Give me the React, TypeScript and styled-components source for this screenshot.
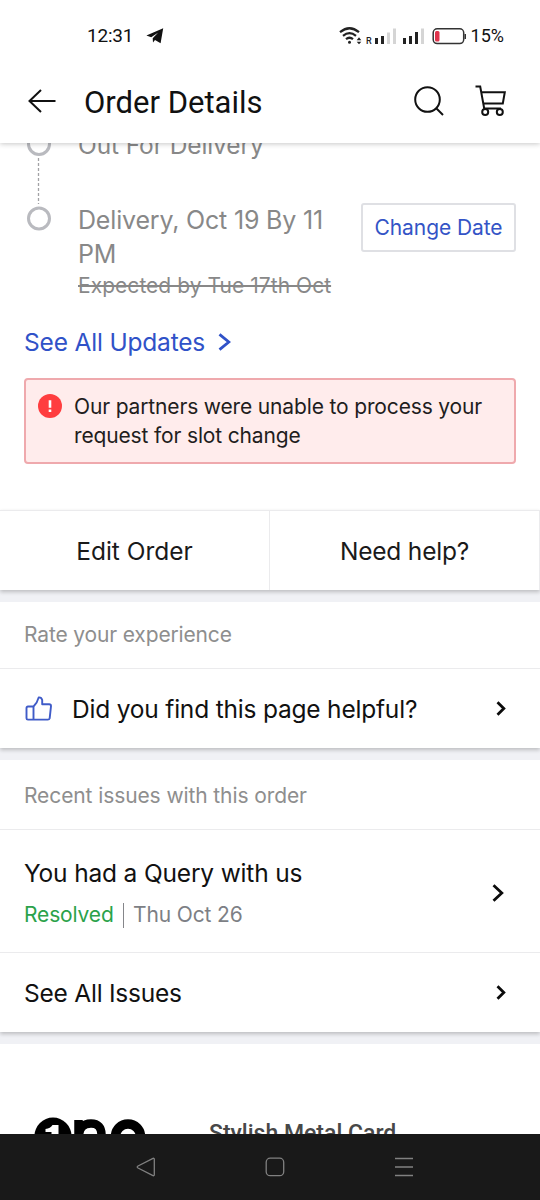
import React from "react";
import styled, { createGlobalStyle } from "styled-components";

const Global = createGlobalStyle`
  *, *::before, *::after { box-sizing: border-box; }
  body { margin: 0; background: #fff; }
`;

const Screen = styled.div`
  width: 540px;
  height: 1200px;
  display: flex;
  flex-direction: column;
  overflow: hidden;
  background: #fff;
  color: #111;
  font-family: Inter, sans-serif;
`;

const Top = styled.div`
  flex: none;
  height: 143px;
  background: #fff;
  z-index: 1;
  box-shadow: 0 1px 5px rgba(0, 0, 0, 0.22);
`;

const StatusBar = styled.div`
  height: 72px;
  padding: 0 36px 0 87px;
  display: flex;
  align-items: center;
  justify-content: space-between;
`;

const StatusGroup = styled.div<{ $gap: number }>`
  display: flex;
  align-items: center;
  gap: ${(p) => p.$gap}px;
`;

const Label = styled.span<{ $size: number; $lh: number; $ls?: number; $color?: string; $weight?: number; $family?: string }>`
  display: block;
  white-space: nowrap;
  font-size: ${(p) => p.$size}px;
  line-height: ${(p) => p.$lh}px;
  letter-spacing: ${(p) => p.$ls ?? 0}px;
  color: ${(p) => p.$color ?? "#111"};
  font-weight: ${(p) => p.$weight ?? 400};
  ${(p) => (p.$family ? `font-family: ${p.$family}, sans-serif;` : "")}
`;

const Header = styled.header`
  height: 60px;
  padding: 0 33px 0 28px;
  display: flex;
  align-items: center;
  gap: 28px;
`;

const BackIcon = styled.svg`
  margin-bottom: 2px;
`;

const Title = styled(Label)`
  padding-top: 2px;
`;

const HeaderActions = styled.div`
  margin-left: auto;
  padding-bottom: 2px;
  display: flex;
  align-items: center;
  gap: 31px;
`;

const Content = styled.main`
  flex: 1;
  min-height: 0;
  overflow: hidden;
  background: #f0f1f5;
`;

const Tracking = styled.section`
  height: 367px;
  padding: 0 24px;
  background: #fff;
`;

const Timeline = styled.div`
  height: 180px;
  display: flex;
`;

const Rail = styled.div`
  width: 54px;
  padding-left: 3px;
  margin-top: -11px;
`;

const Steps = styled.div`
  width: 270px;
  margin-top: -15px;
`;

const Step = styled.div<{ $gap: number }>`
  margin-bottom: ${(p) => p.$gap}px;
`;

const Struck = styled(Label)`
  text-decoration: line-through;
  text-decoration-thickness: 2px;
`;

const OutlineButton = styled.button`
  flex: none;
  width: 155px;
  height: 49px;
  margin: 60px 0 0 auto;
  padding: 0;
  display: flex;
  align-items: center;
  justify-content: center;
  background: #fff;
  border: 2px solid #dfe0e4;
  border-radius: 3px;
  font-family: inherit;
`;

const UpdatesLink = styled.div`
  height: 38px;
  display: flex;
  align-items: center;
  gap: 13px;
`;

const Alert = styled.div`
  width: 492px;
  height: 86px;
  margin-top: 17px;
  padding: 12px 12px 0;
  display: flex;
  gap: 12px;
  background: #ffecec;
  border: 2px solid #efa9ad;
  border-radius: 4px;
`;

const AlertIcon = styled.div`
  margin-top: 2px;
  height: 24px;
`;

const ActionRow = styled.div`
  height: 80px;
  display: grid;
  grid-template-columns: 1fr 1fr;
  background: #fff;
  border-top: 1px solid #ebebed;
  box-shadow: 0 2px 4px rgba(0, 0, 0, 0.22);
`;

const ActionCell = styled.div`
  display: flex;
  align-items: center;
  justify-content: center;
  border-right: 1px solid #ebebed;
`;

const Card = styled.section`
  margin-top: 12px;
  background: #fff;
  box-shadow: 0 2px 4px rgba(0, 0, 0, 0.22);
  clip-path: inset(0 0 -8px 0);
`;

const Row = styled.div<{ $h: number; $right?: number; $top?: number; $left?: number; $gap?: number; $line?: boolean }>`
  height: ${(p) => p.$h}px;
  padding: ${(p) => p.$top ?? 0}px ${(p) => p.$right ?? 34}px 0 ${(p) => p.$left ?? 24}px;
  display: flex;
  align-items: center;
  gap: ${(p) => p.$gap ?? 0}px;
  border-bottom: ${(p) => (p.$line ? "1px solid #ebebed" : "none")};
  > svg:last-child { margin-left: auto; }
`;

const Meta = styled.div`
  margin-top: 10px;
  display: flex;
  align-items: center;
  gap: 9px;
`;

const Bar = styled.span`
  width: 1.5px;
  height: 25px;
  background: #85868a;
`;

const Sponsor = styled.section`
  margin-top: 12px;
  height: 120px;
  padding: 73px 0 0 34px;
  display: flex;
  background: #fff;
`;

const LogoArt = styled.svg`
  margin-right: 63px;
`;

const NavBar = styled.nav`
  flex: none;
  height: 66px;
  padding: 0 126px 0 136px;
  display: flex;
  align-items: center;
  justify-content: space-between;
  background: #191919;
`;

const Chevron = ({ w, h, sw = 2.8, color = "#0b0b0b" }: { w: number; h: number; sw?: number; color?: string }) => (
  <svg width={w} height={h} fill="none" stroke={color} strokeWidth={sw} strokeLinejoin="miter">
    <path d={`M1.5 1.3 L${w - 2.2} ${h / 2} L1.5 ${h - 1.3}`} />
  </svg>
);

const StatusIcons = () => (
  <svg width="128" height="20" viewBox="339 26 128 20" fill="none">
    <g stroke="#222" strokeWidth="2.200">
      <path d="M340 32.2Q349.500 24.300 359 32.200" />
      <path d="M343 35.800Q349.500 30.300 356 35.800" />
      <path d="M346 39.200Q349.500 36.300 353 39.200" />
    </g>
    <circle cx="349.500" cy="42.300" r="1.500" fill="#222" />
    <path d="M356.700 40.300 359 37.300l2.300 3zM356.700 41.700 359 44.300l2.300-2.600z" fill="#222" />
    <path d="M375 38h3v6h-3zM381 36h3v8h-3zM403 38h3v6h-3zM409 36h3v8h-3zM415 32h3v12h-3z" fill="#222" />
    <path d="M387 32.500h3V44h-3zM393 28.500h3V44h-3zM421 28.500h3V44h-3z" fill="#d5d5d5" />
    <text x="366" y="44" fontFamily="Roboto, sans-serif" fontWeight="500" fontSize="9" fill="#222">R</text>
    <rect x="433.200" y="28.800" width="30.500" height="14.800" rx="4" stroke="#333" strokeWidth="1.500" />
    <path d="M464.500 34h1.500v5h-1.500z" fill="#333" />
    <rect x="435" y="31" width="4.500" height="10.500" rx="1.500" fill="#e0344c" />
  </svg>
);

export default function App() {
  return (
    <Screen>
      <Global />
      <Top>
        <StatusBar>
          <StatusGroup $gap={13}>
            <Label $size={19} $lh={24} $ls={-0.2} $family="Roboto">12:31</Label>
            <svg width="18" height="16" viewBox="0 0 18 16" fill="#111">
              <path d="M.4 7.600 17.200.300 14.600 15.200 9 12l-2 2.400-.3-4.200L12 4.700 5.200 9.300z" />
            </svg>
          </StatusGroup>
          <StatusGroup $gap={4}>
            <StatusIcons />
            <Label $size={18} $lh={24} $family="Roboto">15%</Label>
          </StatusGroup>
        </StatusBar>
        <Header>
          <BackIcon width="28" height="24" viewBox="0 0 28 24" fill="none" stroke="#111" strokeWidth="2">
            <path d="M27.500 12H1.500M13 1 1.500 12 13 23" />
          </BackIcon>
          <Title $size={31} $lh={36} $family="Roboto">Order Details</Title>
          <HeaderActions>
            <svg width="30" height="30" viewBox="0 0 30 30" fill="none" stroke="#111" strokeWidth="2">
              <circle cx="13.500" cy="13.500" r="12.300" />
              <path d="m22 22 7 7" />
            </svg>
            <svg width="32" height="32" viewBox="475 85 32 32" fill="none" stroke="#111" strokeWidth="2">
              <path d="M475.500 86.500h4.700l4 22H501M481.500 92.200h23.300l-2 11.300h-19" />
              <circle cx="485.200" cy="112" r="3" />
              <circle cx="499.800" cy="112" r="3" />
            </svg>
          </HeaderActions>
        </Header>
      </Top>
      <Content>
        <Tracking>
          <Timeline>
            <Rail>
              <svg width="24" height="100" viewBox="0 0 24 100" fill="none">
                <g stroke="#b9babf" strokeWidth="3">
                  <circle cx="12" cy="12" r="10.500" />
                  <circle cx="12" cy="86.500" r="10.500" />
                </g>
                <path d="M11.500 26v46" stroke="#a2a2a5" strokeWidth="1.300" strokeDasharray="3 2" />
              </svg>
            </Rail>
            <Steps>
              <Step $gap={41}>
                <Label $size={24.5} $lh={34} $ls={-0.1} $color="#888">Out For Delivery</Label>
              </Step>
              <Step $gap={0}>
                <Label $size={25} $lh={34} $ls={-0.18} $color="#888">Delivery, Oct 19 By 11<br />PM</Label>
                <Struck $size={21} $lh={30} $ls={0.04} $color="#888">Expected by Tue 17th Oct</Struck>
              </Step>
            </Steps>
            <OutlineButton>
              <Label $size={21} $lh={30} $ls={-0.08} $color="#3454c6">Change Date</Label>
            </OutlineButton>
          </Timeline>
          <UpdatesLink>
            <Label $size={24.5} $lh={34} $ls={-0.18} $color="#3052c8">See All Updates</Label>
            <Chevron w={13} h={18} color="#3052c8" />
          </UpdatesLink>
          <Alert>
            <AlertIcon>
              <svg width="24" height="24" viewBox="0 0 24 24">
                <circle cx="12" cy="12" r="12" fill="#ff3d3f" />
                <path d="M10.700 6.300h2.600v7.400h-2.600zM10.700 15.500h2.600V18h-2.600z" fill="#fff" />
              </svg>
            </AlertIcon>
            <Label $size={21} $lh={29} $ls={-0.15} $color="#221d1d">Our partners were unable to process your<br />request for slot change</Label>
          </Alert>
        </Tracking>
        <ActionRow>
          <ActionCell><Label $size={24.5} $lh={34} $color="#1a1a1a">Edit Order</Label></ActionCell>
          <ActionCell><Label $size={24.5} $lh={34} $ls={-0.2} $color="#1a1a1a">Need help?</Label></ActionCell>
        </ActionRow>
        <Card>
          <Row $h={67} $line><Label $size={21} $lh={30} $ls={-0.15} $color="#8e8e8e">Rate your experience</Label></Row>
          <Row $h={79} $left={25} $gap={20}>
            <svg width="27" height="26" viewBox="0 0 27 26" fill="none" stroke="#3f5bc8" strokeWidth="1.900" strokeLinejoin="round">
              <path d="M8.500 10.500h-5.500Q1.500 10.500 1.500 12v10.300Q1.500 23.600 3 23.600h19.800q1.500 0 1.900-1.400L26 10.200Q26 8.300 24.200 8.300h-7V4q-.7-2.800-3.500-2.600Q12.500 6.500 8.500 10.500V23.600" />
            </svg>
            <Label $size={24.5} $lh={34} $ls={-0.2}>Did you find this page helpful?</Label>
            <Chevron w={10} h={15} />
          </Row>
        </Card>
        <Card>
          <Row $h={70} $top={3} $line><Label $size={21} $lh={30} $ls={-0.1} $color="#8e8e8e">Recent issues with this order</Label></Row>
          <Row $h={123} $right={36} $top={4} $line>
            <div>
              <Label $size={24.5} $lh={34} $ls={-0.17}>You had a Query with us</Label>
              <Meta>
                <Label $size={21} $lh={30} $ls={-0.15} $color="#2ba24a">Resolved</Label>
                <Bar />
                <Label $size={21} $lh={30} $ls={-0.15} $color="#7d7f85">Thu Oct 26</Label>
              </Meta>
            </div>
            <Chevron w={12} h={18} />
          </Row>
          <Row $h={79}>
            <Label $size={24.5} $lh={34} $ls={-0.23}>See All Issues</Label>
            <Chevron w={10} h={15} />
          </Row>
        </Card>
        <Sponsor>
          <LogoArt width="112" height="48" viewBox="0 0 112 48" fill="none">
            <circle cx="19" cy="19" r="18.500" fill="#000" />
            <path d="M11.500 12q5-.5 7-4h6v23h-7V15h-6z" fill="#fff" />
            <path d="M44.500 3v35M45 20Q45 6.500 57 6.500 67.500 6.500 67.500 18v20" stroke="#000" strokeWidth="8.500" />
            <circle cx="94" cy="19.500" r="12.500" stroke="#000" strokeWidth="9.500" />
          </LogoArt>
          <Label $size={23} $lh={34} $weight={500} $family="Roboto" $color="#484848">Stylish Metal Card</Label>
        </Sponsor>
      </Content>
      <NavBar>
        <svg width="20" height="20" viewBox="0 0 20 20" fill="none" stroke="#818181" strokeWidth="1.300" strokeLinejoin="round">
          <path d="M17 1.300 2 9q-1.600 1 0 2l15 7.700q1.300.3 1.300-1V2.300q0-1.300-1.300-1z" />
        </svg>
        <svg width="20" height="20" viewBox="0 0 20 20" fill="none" stroke="#818181" strokeWidth="1.300">
          <rect x="1.200" y="1.200" width="17.500" height="17.500" rx="4" />
        </svg>
        <svg width="20" height="20" viewBox="0 0 20 20" fill="none" stroke="#818181" strokeWidth="1.300">
          <path d="M1 1.500h18M1 10h18M1 18.500h18" />
        </svg>
      </NavBar>
    </Screen>
  );
}
